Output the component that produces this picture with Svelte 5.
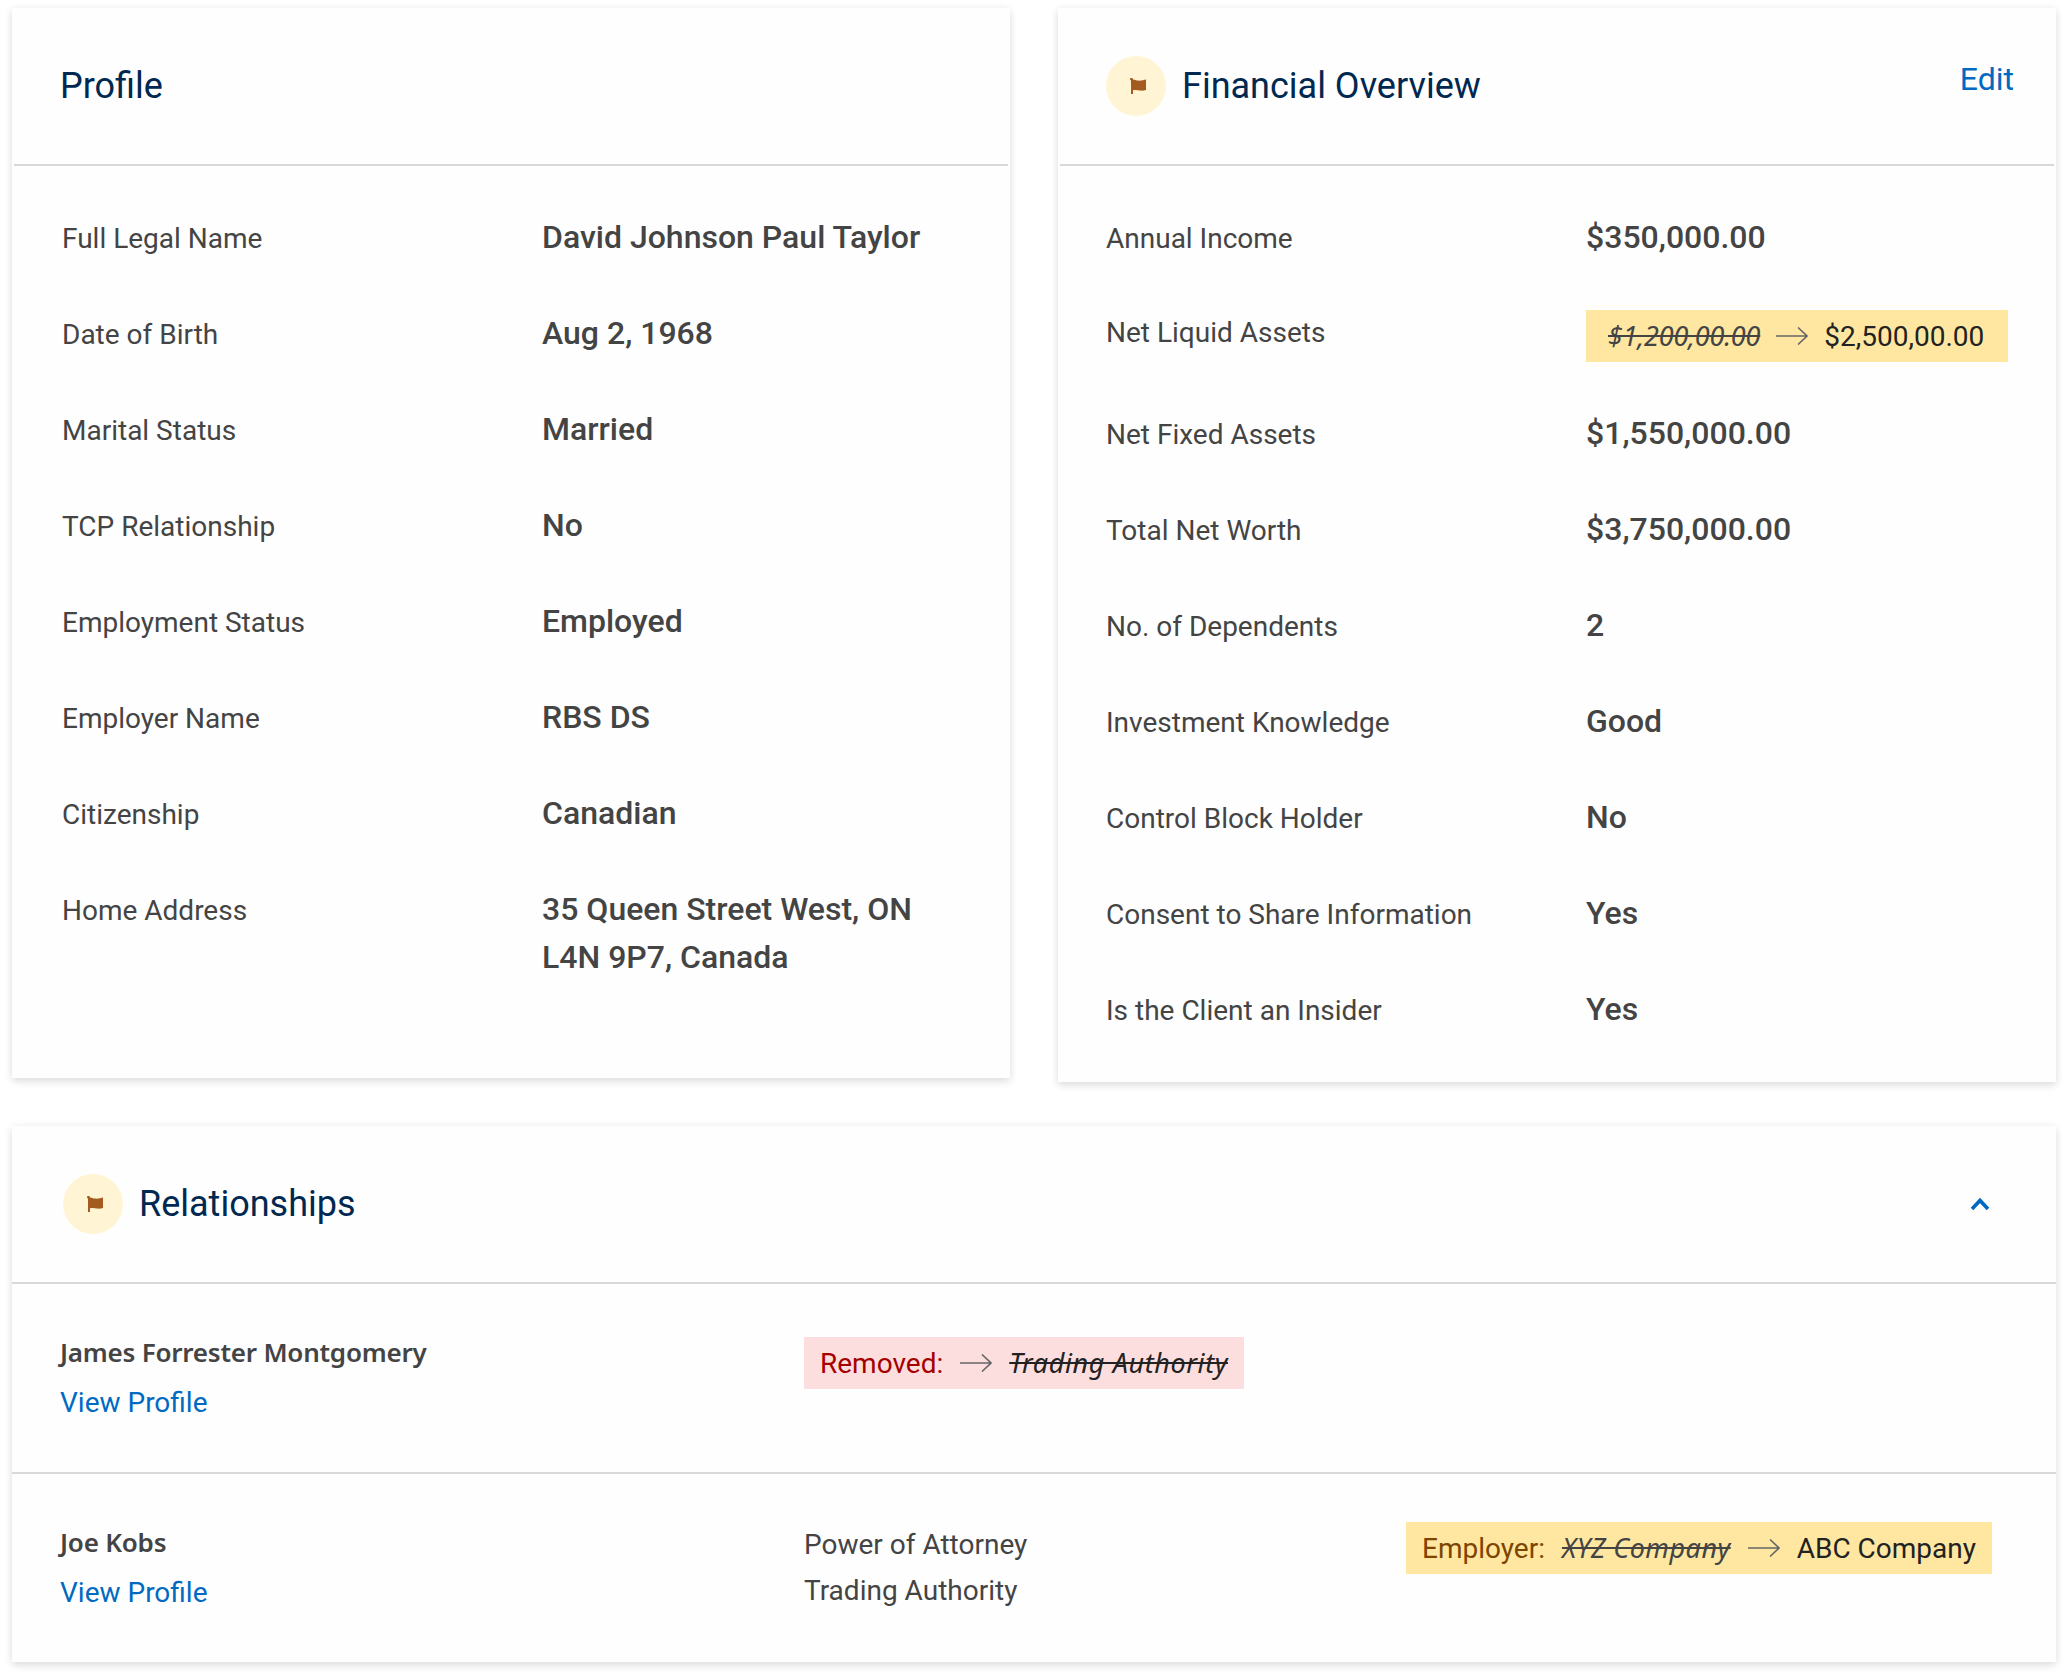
<script lang="ts">
    interface Change {
        label?: string;
        from?: string;
        to?: string;
        removed?: boolean;
    }

    interface Field {
        label: string;
        value?: string[];
        change?: Change;
    }

    interface Relationship {
        name: string;
        roles: string[];
        roleChange?: Change;
        detailChange?: Change;
    }

    const profile: Field[] = [
        { label: 'Full Legal Name', value: ['David Johnson Paul Taylor'] },
        { label: 'Date of Birth', value: ['Aug 2, 1968'] },
        { label: 'Marital Status', value: ['Married'] },
        { label: 'TCP Relationship', value: ['No'] },
        { label: 'Employment Status', value: ['Employed'] },
        { label: 'Employer Name', value: ['RBS DS'] },
        { label: 'Citizenship', value: ['Canadian'] },
        { label: 'Home Address', value: ['35 Queen Street West, ON', 'L4N 9P7, Canada'] }
    ];

    const financial: Field[] = [
        { label: 'Annual Income', value: ['$350,000.00'] },
        { label: 'Net Liquid Assets', change: { from: '$1,200,00.00', to: '$2,500,00.00' } },
        { label: 'Net Fixed Assets', value: ['$1,550,000.00'] },
        { label: 'Total Net Worth', value: ['$3,750,000.00'] },
        { label: 'No. of Dependents', value: ['2'] },
        { label: 'Investment Knowledge', value: ['Good'] },
        { label: 'Control Block Holder', value: ['No'] },
        { label: 'Consent to Share Information', value: ['Yes'] },
        { label: 'Is the Client an Insider', value: ['Yes'] }
    ];

    const relationships: Relationship[] = [
        {
            name: 'James Forrester Montgomery',
            roles: [],
            roleChange: { label: 'Removed:', to: 'Trading Authority', removed: true }
        },
        {
            name: 'Joe Kobs',
            roles: ['Power of Attorney', 'Trading Authority'],
            detailChange: { label: 'Employer:', from: 'XYZ Company', to: 'ABC Company' }
        }
    ];

    let expanded = $state(true);
</script>

{#snippet flag()}
    <span class="flag">
        <svg viewBox="0 0 16 16" width="16" height="16">
            <path d="M0 .9C0 .3.6 0 1.500 0 2.500 0 3 .5 3 1.500 5 1.800 6 2.400 8 2.600 11 3 14 2 16 1.600V12C14 12.600 12 13 10 12.600 7 11.800 5 11.700 3 12.200V16H1V2.600C.3 2.300 0 1.700 0 .9Z" />
        </svg>
    </span>
{/snippet}

{#snippet changeTag(change: Change)}
    <div class="change" class:removed={change.removed} class:plain={!change.label}>
        {#if change.label}
            <span class="change-label">{change.label}</span>
        {/if}
        {#if change.from}
            <s class="old">{change.from}</s>
        {/if}
        <svg class="arrow" viewBox="0 0 32 18" width="32" height="18">
            <path d="M0 9H31M22 .5L31 9L22 17.500" />
        </svg>
        {#if change.removed}
            <s class="gone">{change.to}</s>
        {:else}
            <span class="new">{change.to}</span>
        {/if}
    </div>
{/snippet}

{#snippet fieldList(fields: Field[])}
    <dl class="fields">
        {#each fields as field}
            <div class="field" class:changed={field.change}>
                <dt>{field.label}</dt>
                <dd>
                    {#if field.change}
                        {@render changeTag(field.change)}
                    {:else}
                        {#each field.value ?? [] as line}
                            <div>{line}</div>
                        {/each}
                    {/if}
                </dd>
            </div>
        {/each}
    </dl>
{/snippet}

<main class="page">
    <div class="top">
        <section class="card profile">
            <header class="card-header inset">
                <h2>Profile</h2>
            </header>
            {@render fieldList(profile)}
        </section>

        <section class="card">
            <header class="card-header inset">
                {@render flag()}
                <h2>Financial Overview</h2>
                <a class="edit" href="#edit">Edit</a>
            </header>
            {@render fieldList(financial)}
        </section>
    </div>

    <section class="card relationships">
        <header class="card-header">
            {@render flag()}
            <h2>Relationships</h2>
            <button class="toggle" onclick={() => (expanded = !expanded)} aria-label="Toggle relationships">
                <svg class:collapsed={!expanded} viewBox="0 0 18 12" width="18" height="12">
                    <path d="M1 11L9 2.500L17 11" />
                </svg>
            </button>
        </header>
        {#if expanded}
            {#each relationships as person}
                <div class="person">
                    <div class="who">
                        <div class="name">{person.name}</div>
                        <a href="#profile">View Profile</a>
                    </div>
                    <div class="roles">
                        {#each person.roles as role}
                            <div class="role">{role}</div>
                        {/each}
                        {#if person.roleChange}
                            {@render changeTag(person.roleChange)}
                        {/if}
                    </div>
                    <div class="details">
                        {#if person.detailChange}
                            {@render changeTag(person.detailChange)}
                        {/if}
                    </div>
                </div>
            {/each}
        {/if}
    </section>
</main>

<style>
    :global(body) {
        margin: 0;
        background: #fff;
    }

    .page {
        box-sizing: border-box;
        width: 2068px;
        height: 1678px;
        padding: 8px 12px;
        overflow: hidden;
        font-family: Roboto, sans-serif;
        font-size: 28px;
        color: #444;
    }

    .top {
        display: flex;
        align-items: flex-start;
        gap: 48px;
        height: 1118px;
    }
    .top .card {
        flex: none;
        width: 998px;
    }

    .card {
        background: #fefefe;
        box-shadow: 0 4px 8px rgba(0,0,0,0.1), 0 0 8px rgba(0,0,0,0.06);
    }

    /* Card header */
    .card-header {
        box-sizing: border-box;
        display: flex;
        align-items: center;
        height: 158px;
        padding: 0 48px;
        border-bottom: 2px solid #d8d8d8;
    }
    .card-header.inset {
        margin: 0 2px;
        padding: 0 46px;
    }
    .relationships .card-header { padding-left: 51px; }
    h2 {
        margin: 0;
        font-size: 36px;
        font-weight: 400;
        line-height: 48px;
        color: #002850;
    }
    a {
        color: #006ac3;
        text-decoration: none;
    }
    .edit {
        margin: 0 -6px 14px auto;
        font-size: 32px;
    }
    .flag {
        box-sizing: border-box;
        flex: none;
        width: 60px;
        height: 60px;
        margin-right: 16px;
        padding: 22px 20px 22px 24px;
        border-radius: 50%;
        background: #fff5d5;
    }
    .flag svg {
        display: block;
        fill: #a35b1f;
    }
    .toggle {
        margin-left: auto;
        margin-right: 9px;
        padding: 10px;
        border: none;
        background: none;
        cursor: pointer;
    }
    .toggle svg {
        display: block;
        overflow: visible;
        fill: none;
        stroke: #006ac3;
        stroke-width: 3.6;
    }
    .toggle svg.collapsed { transform: rotate(180deg); }

    /* Label / value rows */
    .fields {
        display: flex;
        flex-direction: column;
        gap: 48px;
        margin: 0;
        padding: 47px 48px 49px 48px;
    }
    .profile .fields {
        padding-left: 50px;
        padding-bottom: 97px;
    }
    .field {
        display: flex;
        min-height: 48px;
    }
    dt {
        flex: none;
        width: 480px;
        margin-bottom: -4px;
        line-height: 52px;
    }
    dd {
        margin: 0;
        font-size: 32px;
        font-weight: 500;
        line-height: 48px;
        white-space: nowrap;
    }
    .changed dt { line-height: 48px; }
    .changed dd { padding-top: 1px; margin-bottom: -1px; }

    /* Highlighted change */
    .change {
        box-sizing: border-box;
        display: inline-flex;
        align-items: center;
        gap: 17px;
        height: 52px;
        padding: 2px 16px 0;
        vertical-align: top;
        background: #ffe7a1;
        font-size: 28px;
        font-weight: 400;
        line-height: 50px;
        white-space: nowrap;
    }
    .change.plain {
        gap: 16px;
        padding: 2px 24px 0 22px;
    }
    .change-label { color: #7d4500; }
    .new, .gone { color: #222; }
    .old, .gone {
        margin-bottom: 2px;
        font-family: "Noto Sans", sans-serif;
        font-size: 27px;
        font-style: italic;
        letter-spacing: 0.5px;
        text-decoration-thickness: 2px;
    }
    .gone { letter-spacing: 0.6px; }
    .plain .old { letter-spacing: -0.2px; }
    .arrow {
        margin-bottom: 2px;
        fill: none;
        stroke: #666;
        stroke-width: 1.6;
    }
    .change.removed { background: #fddede; }
    .removed .change-label { color: #a50000; }

    /* Relationship rows */
    .person {
        box-sizing: border-box;
        display: grid;
        grid-template-columns: 744px 602px 1fr;
        height: 190px;
        padding: 48px 48px 0;
        border-bottom: 2px solid #d8d8d8;
    }
    .person:last-child {
        height: 188px;
        border-bottom: none;
    }
    .name {
        font-family: "Noto Sans", sans-serif;
        font-size: 26px;
        font-weight: 600;
        line-height: 40px;
        letter-spacing: -0.22px;
    }
    .who a { line-height: 62px; }
    .roles .change { margin-top: 5px; }
    .role { line-height: 46px; }
</style>
